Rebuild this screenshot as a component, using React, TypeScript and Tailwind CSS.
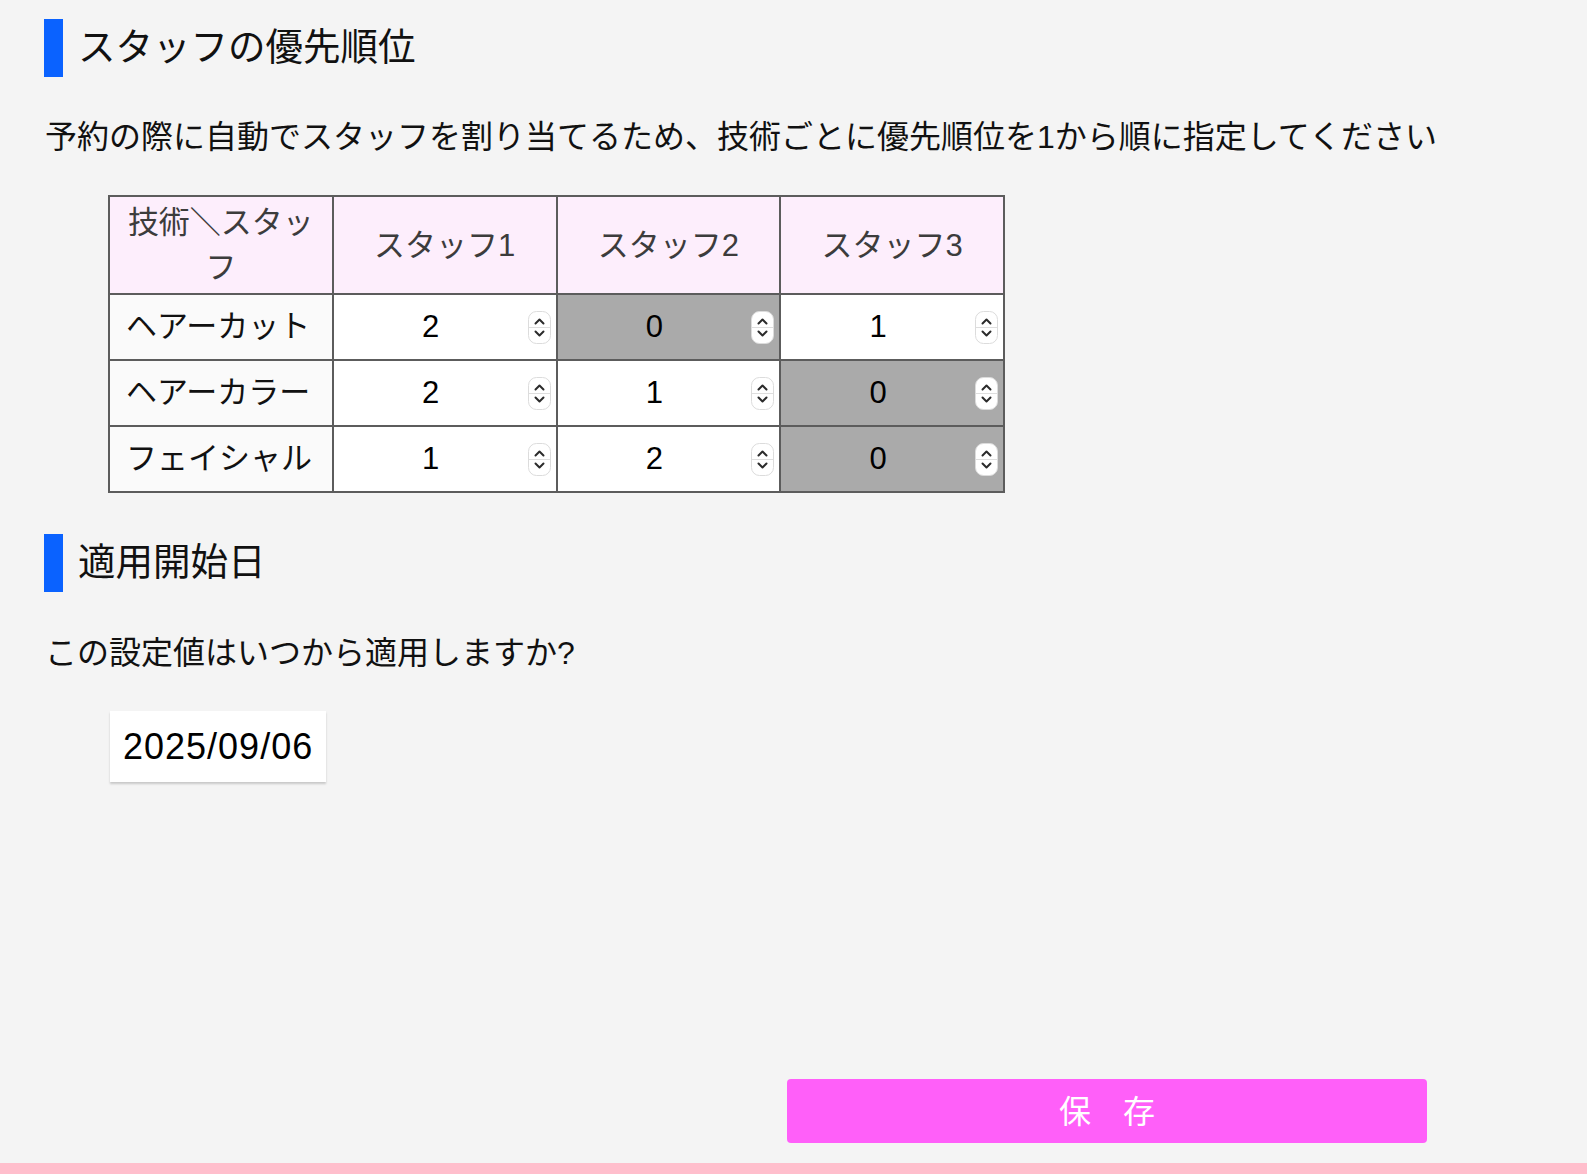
const font = "font-['Liberation_Sans','Noto_Sans_CJK_JP',sans-serif]"

const staff = ["スタッフ1", "スタッフ2", "スタッフ3"]
const rows = [
  { name: "ヘアーカット", values: [2, 0, 1] },
  { name: "ヘアーカラー", values: [2, 1, 0] },
  { name: "フェイシャル", values: [1, 2, 0] },
]

const Spinner = () => (
  <svg width="23" height="33" viewBox="0 0 23 33" className="shrink-0">
    <rect x="0.5" y="0.5" width="22" height="32" rx="8" fill="#fff" stroke="#dcdcdc" />
    <line x1="1" y1="16.5" x2="22" y2="16.5" stroke="#dedede" />
    <path d="M7.5 12.5 L11.5 8.5 L15.5 12.5" fill="none" stroke="#2b2b2b" strokeWidth="2" strokeLinecap="round" strokeLinejoin="round" />
    <path d="M7.5 20.5 L11.5 24.5 L15.5 20.5" fill="none" stroke="#2b2b2b" strokeWidth="2" strokeLinecap="round" strokeLinejoin="round" />
  </svg>
)

const Heading = ({ children }: { children: React.ReactNode }) => (
  <h2 className="h-[58px] border-l-[19px] border-[#0a62ff] pl-[15px] flex items-center text-[37.5px] leading-none text-[#111]">
    {children}
  </h2>
)

export default function App() {
  return (
    <div className={`${font} min-h-screen h-[1174px] bg-[#f4f4f4] flex flex-col`}>
      <main className="flex-1 flex flex-col pl-[44px] pt-[19px]">
        {/* スタッフの優先順位 */}
        <Heading>スタッフの優先順位</Heading>
        <p className="mt-[36px] pl-[1px] text-[32px] leading-[48px] text-[#111]">
          予約の際に自動でスタッフを割り当てるため、技術ごとに優先順位を1から順に指定してください
        </p>

        <table className="mt-[34px] ml-[64px] w-[897px] table-fixed border-collapse">
          <thead>
            <tr>
              <th className="h-[98px] border-2 border-[#5c5c5c] bg-[#fdeefc] px-[9px] text-[31px] leading-[45px] font-normal text-[#3c3c3c]">
                技術＼スタッフ
              </th>
              {staff.map((s) => (
                <th
                  key={s}
                  className="h-[98px] border-2 border-[#5c5c5c] bg-[#fdeefc] px-[8px] text-[31px] leading-[45px] font-normal text-[#3c3c3c]"
                >
                  {s}
                </th>
              ))}
            </tr>
          </thead>
          <tbody>
            {rows.map((r) => (
              <tr key={r.name}>
                <td className="h-[66px] border-2 border-[#5c5c5c] bg-[#fafafa] pl-[16px] text-[31px] text-[#111]">
                  {r.name}
                </td>
                {r.values.map((v, i) => (
                  <td
                    key={i}
                    className={`h-[66px] border-2 border-[#5c5c5c] p-0 ${v === 0 ? "bg-[#aaaaaa]" : "bg-white"}`}
                  >
                    <div className="flex items-center pr-[5px]">
                      <span className="flex-1 text-center text-[31px] text-black">{v}</span>
                      <Spinner />
                    </div>
                  </td>
                ))}
              </tr>
            ))}
          </tbody>
        </table>

        {/* 適用開始日 */}
        <div className="mt-[41px]">
          <Heading>適用開始日</Heading>
        </div>
        <p className="mt-[37px] pl-[1px] text-[32px] leading-[48px] text-[#111]">この設定値はいつから適用しますか?</p>

        <div className="mt-[34px] ml-[66px] w-[216px] h-[71px] bg-white shadow-[0_2px_2px_rgba(0,0,0,0.18)] flex items-center pl-[13px] text-[36px] tracking-[1px] text-black">
          2025/09/06
        </div>

        <div className="mt-auto mb-[20px] flex justify-end pr-[160px]">
          <button className="w-[640px] h-[64px] rounded-[4px] bg-[#ff5ff9] pb-[5px] text-white text-[32px] font-['Noto_Sans_CJK_JP',sans-serif]">
            保　存
          </button>
        </div>
      </main>
      <footer className="h-[11px] bg-[#ffbecc]" />
    </div>
  )
}
